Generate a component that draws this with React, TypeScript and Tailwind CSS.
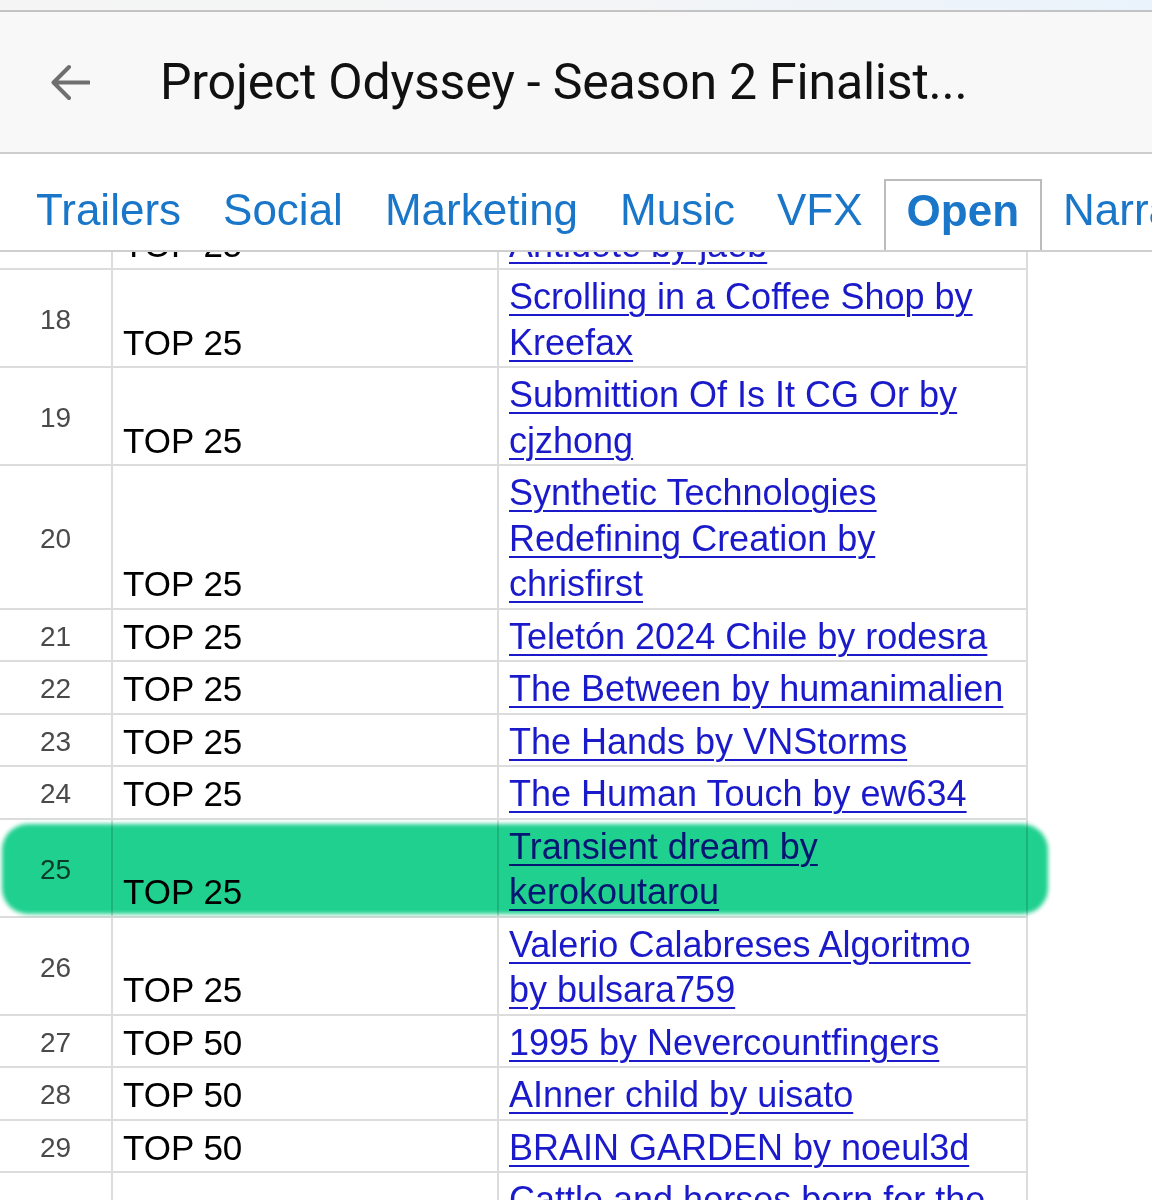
import React from 'react';

type Row = { n: number; rank: string; lines: string[]; marked?: boolean };

const tabs = ['Trailers', 'Social', 'Marketing', 'Music', 'VFX', 'Open', 'Narrative'];

const rows: Row[] = [
  { n: 17, rank: 'TOP 25', lines: ['Artificial Echoes of', 'Antidote by jaeb'] },
  { n: 18, rank: 'TOP 25', lines: ['Scrolling in a Coffee Shop by', 'Kreefax'] },
  { n: 19, rank: 'TOP 25', lines: ['Submittion Of Is It CG Or by', 'cjzhong'] },
  { n: 20, rank: 'TOP 25', lines: ['Synthetic Technologies', 'Redefining Creation by', 'chrisfirst'] },
  { n: 21, rank: 'TOP 25', lines: ['Teletón 2024 Chile by rodesra'] },
  { n: 22, rank: 'TOP 25', lines: ['The Between by humanimalien'] },
  { n: 23, rank: 'TOP 25', lines: ['The Hands by VNStorms'] },
  { n: 24, rank: 'TOP 25', lines: ['The Human Touch by ew634'] },
  { n: 25, rank: 'TOP 25', lines: ['Transient dream by', 'kerokoutarou'], marked: true },
  { n: 26, rank: 'TOP 25', lines: ['Valerio Calabreses Algoritmo', 'by bulsara759'] },
  { n: 27, rank: 'TOP 50', lines: ['1995 by Nevercountfingers'] },
  { n: 28, rank: 'TOP 50', lines: ['AInner child by uisato'] },
  { n: 29, rank: 'TOP 50', lines: ['BRAIN GARDEN by noeul3d'] },
  { n: 30, rank: 'TOP 50', lines: ['Cattle and horses born for the', 'wind by hirokazu'] },
];

function BackArrow() {
  return (
    <svg width="40" height="37" viewBox="0 0 40 37" fill="none">
      <path d="M39 18.5H4M19 3L3.5 18.5L19 34" stroke="#6f6f6f" strokeWidth="4" strokeLinecap="round" strokeLinejoin="round" />
    </svg>
  );
}

function SheetRow({ row }: { row: Row }) {
  return (
    <div className="relative grid w-[1028px] grid-cols-[113px_386px_529px] border-b-2 border-[#dcdcdc]">
      <div className="flex items-center justify-center border-r-2 border-[#dcdcdc] pt-[4px] text-[28px] text-[#4a4a4a]">
        {row.n}
      </div>
      <div className="flex items-end border-r-2 border-[#dcdcdc] pl-[10px] pb-[1px] text-[35px] leading-[45.5px] text-black">
        {row.rank}
      </div>
      <div className="border-r-2 border-[#dcdcdc] pl-[10px] pt-[4px] pb-[1px] text-[36px] leading-[45.5px]">
        <a href="#" className="text-[#1a1acb] underline decoration-[2px] underline-offset-[5px]">
          {row.lines.map((l, i) => (
            <span key={i} className="whitespace-nowrap">
              {l}
              {i < row.lines.length - 1 && <br />}
            </span>
          ))}
        </a>
      </div>
      {row.marked && (
        <div className="pointer-events-none absolute left-[2px] top-[4px] h-[90px] w-[1046px] rounded-[26px] bg-[#1fd08f] mix-blend-multiply blur-[2px]" />
      )}
    </div>
  );
}

export default function App() {
  return (
    <div className="flex h-[1200px] w-[1152px] flex-col overflow-hidden bg-white font-['Liberation_Sans',Arial,sans-serif]">
      {/* status strip */}
      <div className="h-[12px] shrink-0 border-b-2 border-[#c4c4c4] bg-gradient-to-r from-[#f5f5f5] via-[#f4f5f6] to-[#eaf3fc]" />

      {/* title bar */}
      <div className="flex h-[142px] shrink-0 items-center border-b-2 border-[#cdcdcd] bg-[#f8f8f8] shadow-[0_1px_2px_rgba(0,0,0,0.12)]">
        <div className="ml-[50px] mr-[70px] flex items-center">
          <BackArrow />
        </div>
        <h1 className="whitespace-nowrap font-['Roboto',sans-serif] text-[50px] font-normal leading-none tracking-[-0.2px] text-[#111111]">
          Project Odyssey - Season 2 Finalist...
        </h1>
      </div>

      {/* sheet tabs */}
      <div className="flex h-[96px] shrink-0 items-end bg-white pl-[15px]">
        {tabs.map((t) => (
          <div
            key={t}
            className={
              t === 'Open'
                ? 'flex h-[71px] items-center whitespace-nowrap border-2 border-b-0 border-[#bcbcbc] px-[21px] pb-[9px] text-[44px] font-bold leading-[44px] text-[#1976c8]'
                : 'flex h-[71px] items-center whitespace-nowrap px-[21px] pb-[9px] text-[44px] leading-[44px] text-[#1976c8]'
            }
          >
            {t}
          </div>
        ))}
      </div>

      {/* grid */}
      <div className="flex-1 overflow-hidden border-t-2 border-[#cfcfcf]">
        <div className="-mt-[80px]">
          {rows.map((r) => (
            <SheetRow key={r.n} row={r} />
          ))}
        </div>
      </div>
    </div>
  );
}
